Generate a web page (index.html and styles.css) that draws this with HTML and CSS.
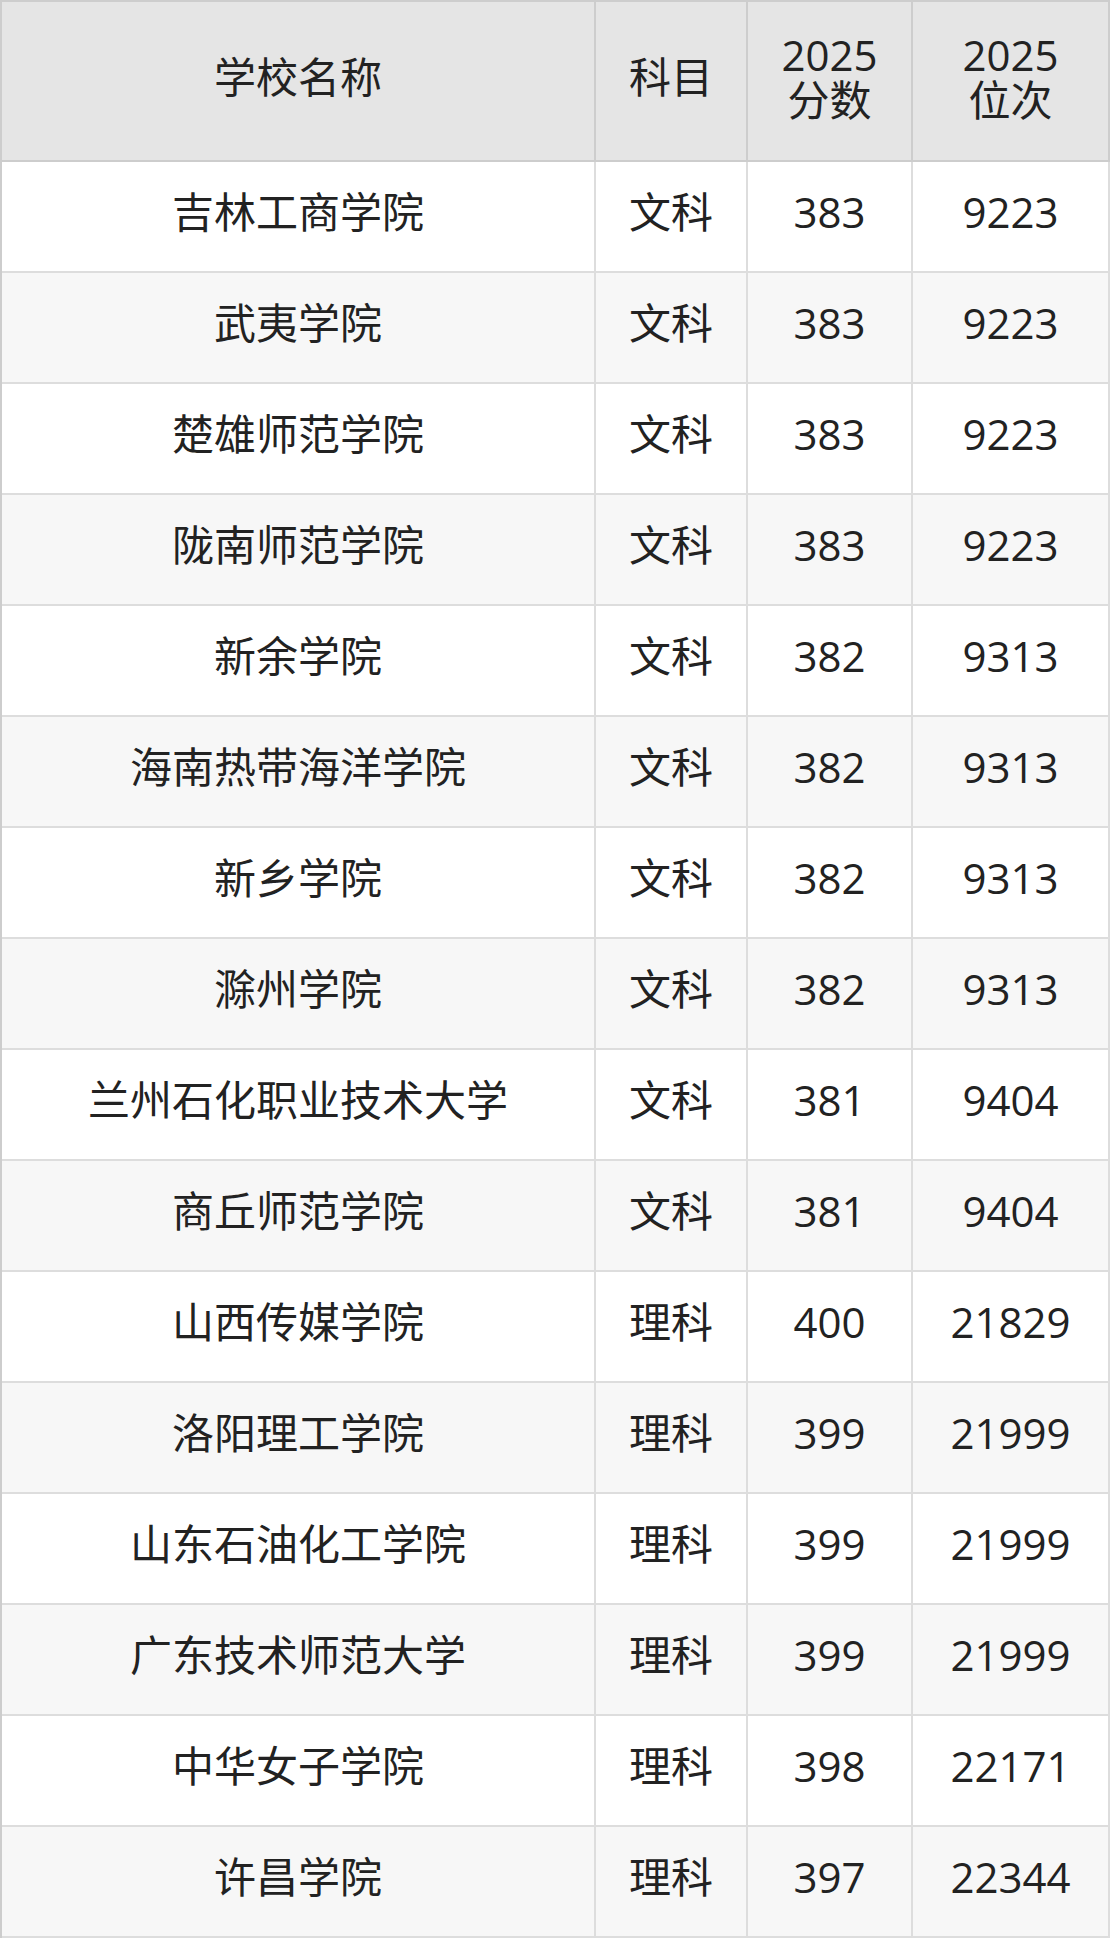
FILE: index.html
```html
<!DOCTYPE html>
<html lang="zh-CN">
<head>
<meta charset="utf-8">
<title>2025 分数位次</title>
<link rel="stylesheet" href="styles.css">
</head>
<body>
<table class="score-table">
  <thead>
    <tr>
      <th class="col-name">学校名称</th>
      <th class="col-subject">科目</th>
      <th class="col-score"><span class="line">2025</span><span class="line">分数</span></th>
      <th class="col-rank"><span class="line">2025</span><span class="line">位次</span></th>
    </tr>
  </thead>
  <tbody>
    <tr><td>吉林工商学院</td><td>文科</td><td>383</td><td>9223</td></tr>
    <tr><td>武夷学院</td><td>文科</td><td>383</td><td>9223</td></tr>
    <tr><td>楚雄师范学院</td><td>文科</td><td>383</td><td>9223</td></tr>
    <tr><td>陇南师范学院</td><td>文科</td><td>383</td><td>9223</td></tr>
    <tr><td>新余学院</td><td>文科</td><td>382</td><td>9313</td></tr>
    <tr><td>海南热带海洋学院</td><td>文科</td><td>382</td><td>9313</td></tr>
    <tr><td>新乡学院</td><td>文科</td><td>382</td><td>9313</td></tr>
    <tr><td>滁州学院</td><td>文科</td><td>382</td><td>9313</td></tr>
    <tr><td>兰州石化职业技术大学</td><td>文科</td><td>381</td><td>9404</td></tr>
    <tr><td>商丘师范学院</td><td>文科</td><td>381</td><td>9404</td></tr>
    <tr><td>山西传媒学院</td><td>理科</td><td>400</td><td>21829</td></tr>
    <tr><td>洛阳理工学院</td><td>理科</td><td>399</td><td>21999</td></tr>
    <tr><td>山东石油化工学院</td><td>理科</td><td>399</td><td>21999</td></tr>
    <tr><td>广东技术师范大学</td><td>理科</td><td>399</td><td>21999</td></tr>
    <tr><td>中华女子学院</td><td>理科</td><td>398</td><td>22171</td></tr>
    <tr><td>许昌学院</td><td>理科</td><td>397</td><td>22344</td></tr>
  </tbody>
</table>
</body>
</html>
```
FILE: styles.css
```css
html, body {
  margin: 0;
  padding: 0;
  background: #ffffff;
}

.score-table {
  width: 1110px;
  table-layout: fixed;
  border-collapse: separate;
  border-spacing: 0;
  border-top: 2px solid #cdcdcd;
  border-left: 2px solid #cdcdcd;
  font-family: "Open Sans", "Noto Sans CJK SC", sans-serif;
  font-size: 42px;
  color: #222222;
}

.score-table th,
.score-table td {
  box-sizing: border-box;
  padding: 0 0 8px 0;
  text-align: center;
  vertical-align: middle;
}

.score-table th {
  height: 160px;
  background: #e5e5e5;
  font-weight: normal;
  line-height: 1.2;
  border-right: 2px solid #cdcdcd;
  border-bottom: 2px solid #cdcdcd;
}

.score-table th .line {
  display: block;
  height: 45px;
  line-height: 45px;
}

.score-table td {
  height: 111px;
  line-height: 1.2;
  border-right: 2px solid #dddddd;
  border-bottom: 2px solid #dddddd;
}

.score-table tbody tr:nth-child(even) td {
  background: #f7f7f7;
}

.col-name { width: 594px; }
.col-subject { width: 152px; }
.col-score { width: 165px; }
.col-rank { width: 197px; }
```
